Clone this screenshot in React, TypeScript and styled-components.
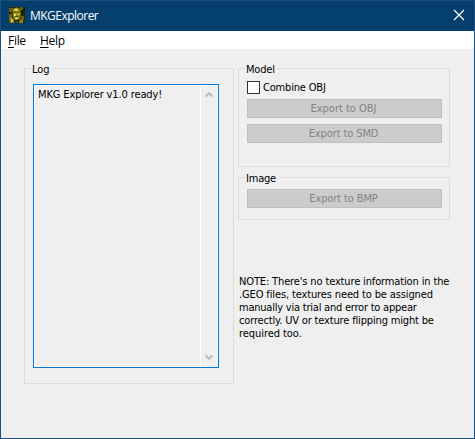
import React from "react";
import styled, { createGlobalStyle } from "styled-components";

const GlobalStyle = createGlobalStyle`
  * { box-sizing: border-box; }
  body { margin: 0; overflow: hidden; background: #efefef; }
`;

const Window = styled.div`
  width: 475px;
  height: 439px;
  display: flex;
  flex-direction: column;
  background: #efefef;
  border: 1px solid #1b4f80;
  font-family: "DejaVu Sans Condensed", "DejaVu Sans", Tahoma, sans-serif;
  font-stretch: condensed;
  font-size: 11px;
  line-height: 13px;
  color: #000;
  cursor: default;
`;

const TitleBar = styled.header`
  height: 30px;
  flex: none;
  display: flex;
  align-items: center;
  padding: 0 9px 2px 8px;
  background: #053f6e;
  color: #fff;
  font: 12px/16px "Open Sans", "Segoe UI", sans-serif;
`;

const Title = styled.span`
  flex: 1;
  margin: 2px 0 0 5px;
  letter-spacing: -0.52px;
`;

const MenuBar = styled.nav`
  height: 18px;
  flex: none;
  display: flex;
  gap: 14px;
  padding-left: 7px;
  background: #fff;
  font: 12px/19px "Open Sans", "Segoe UI", sans-serif;
  letter-spacing: -0.3px;
`;

const MenuItem = styled.span<{ $width: number }>`
  width: ${(p) => p.$width}px;
  white-space: nowrap;
  u { text-underline-offset: 2px; text-decoration-thickness: 1px; }
`;

const Content = styled.main`
  display: flex;
  gap: 4px;
  padding: 19px 0 0 23px;
`;

const Column = styled.div`
  width: 212px;
`;

const Group = styled.section<{ $width: number; $height: number }>`
  width: ${(p) => p.$width}px;
  height: ${(p) => p.$height}px;
  padding: 0 7px 0 8px;
  border: 1px solid #dcdcdc;
  & + & { margin-top: 10px; }
`;

const Legend = styled.h2<{ $width: number }>`
  width: ${(p) => p.$width}px;
  height: 13px;
  margin: -6px 0 0 -2px;
  padding-left: 1px;
  background: #efefef;
  font: inherit;
`;

const Text = styled.span<{ $spacing?: number }>`
  display: block;
  white-space: nowrap;
  letter-spacing: ${(p) => p.$spacing ?? 0}px;
`;

const LogBox = styled.div`
  width: 186px;
  height: 284px;
  margin-top: 8px;
  display: flex;
  border: 1px solid #0078d7;
  box-shadow: inset 0 0 0 1px #fff;
`;

const LogText = styled.div`
  flex: 1;
  padding: 3px 0 0 4px;
`;

const ScrollBar = styled.div`
  width: 18px;
  margin: 1px 0;
  display: flex;
  flex-direction: column;
  justify-content: space-between;
  align-items: center;
  padding: 5px 2px 5px 0;
  border-left: 1px solid #fff;
`;

const CheckRow = styled.label`
  height: 13px;
  margin-top: 5px;
  display: flex;
  gap: 3px;
`;

const CheckBox = styled.span`
  width: 13px;
  height: 13px;
  background: #fff;
  border: 1px solid #333;
`;

const Button = styled.button<{ $top: number }>`
  width: 195px;
  height: 19px;
  margin: ${(p) => p.$top}px 0 0;
  padding: 0 2px 0 0;
  display: flex;
  align-items: center;
  justify-content: center;
  background: #ccc;
  border: 1px solid #bfbfbf;
  color: #838383;
  font: inherit;
`;

const Note = styled.p`
  margin: 55px 0 0 1px;
`;

const Arrow = ({ down = false }: { down?: boolean }) => (
  <svg width="8" height="7" viewBox="0 0 8 7" fill="none" stroke="#bdbdbd" strokeWidth="2">
    <path d={down ? "M.7 1.5 4 4.8 7.3 1.5" : "M.7 5.5 4 2.2 7.3 5.5"} />
  </svg>
);

const AppIcon = () => (
  <svg width="16" height="16" viewBox="0 0 16 16">
    <path fill="#2b2806" d="M0 0h16v16H0z" />
    <path fill="#6b640d" d="M0 1h4v4H0zM0 7h3v8H0zM11 0h3v3h-3zM12 9h3v4h-3z" />
    <path fill="#8c8415" d="M4 2Q8-1 11 2L12 7 11 11 9 13H6L4 10ZM1 10 5 12V16H1ZM10 12 14 13V16H10Z" />
    <path fill="#cfc544" d="M5 2Q7 1 9 2V4H5ZM5 6H7V9H5ZM8 6H10V8H8ZM6 10H9V12H6ZM2 11 4 13V15H2Z" />
    <path fill="#f0e879" d="M6 2h2v1H6zM5 7h1v2H5zM7 11h1v1H7z" />
    <path fill="#4b4408" d="M5 5h2v1H5zM8 5h2v1H8zM6 9h3v1H6zM3 3h1v6H3zM6 14h3v2H6z" />
    <path fill="#141405" d="M12 3h2v5h-1zM14 0h2v4h-1zM9 13h2v1H9z" />
  </svg>
);

const noteLines: [string, number][] = [
  ["NOTE: There's no texture information in the", -0.14],
  [".GEO files, textures need to be assigned", -0.13],
  ["manually via trial and error to appear", -0.22],
  ["correctly. UV or texture flipping might be", -0.16],
  ["required too.", -0.06],
];

export default function App() {
  return (
    <>
      <GlobalStyle />
      <Window>
        <TitleBar>
          <AppIcon />
          <Title>MKGExplorer</Title>
          <svg width="12" height="12" viewBox="0 0 12 12" stroke="#fff" strokeWidth="1.2">
            <path d="M1 1 11 11M11 1 1 11" />
          </svg>
        </TitleBar>
        <MenuBar>
          <MenuItem $width={18}><u>F</u>ile</MenuItem>
          <MenuItem $width={26}><u>H</u>elp</MenuItem>
        </MenuBar>
        <Content>
          <Group $width={210} $height={316}>
            <Legend $width={20}><Text>Log</Text></Legend>
            <LogBox>
              <LogText><Text $spacing={-0.12}>MKG Explorer v1.0 ready!</Text></LogText>
              <ScrollBar><Arrow /><Arrow down /></ScrollBar>
            </LogBox>
          </Group>
          <Column>
            <Group $width={212} $height={99}>
              <Legend $width={32}><Text $spacing={-0.2}>Model</Text></Legend>
              <CheckRow><CheckBox /><Text $spacing={-0.18}>Combine OBJ</Text></CheckRow>
              <Button $top={5} disabled><Text>Export to OBJ</Text></Button>
              <Button $top={6} disabled><Text $spacing={-0.1}>Export to SMD</Text></Button>
            </Group>
            <Group $width={212} $height={43}>
              <Legend $width={34}><Text $spacing={-0.2}>Image</Text></Legend>
              <Button $top={4} disabled><Text $spacing={-0.12}>Export to BMP</Text></Button>
            </Group>
            <Note>
              {noteLines.map(([line, spacing]) => <Text key={line} $spacing={spacing}>{line}</Text>)}
            </Note>
          </Column>
        </Content>
      </Window>
    </>
  );
}
